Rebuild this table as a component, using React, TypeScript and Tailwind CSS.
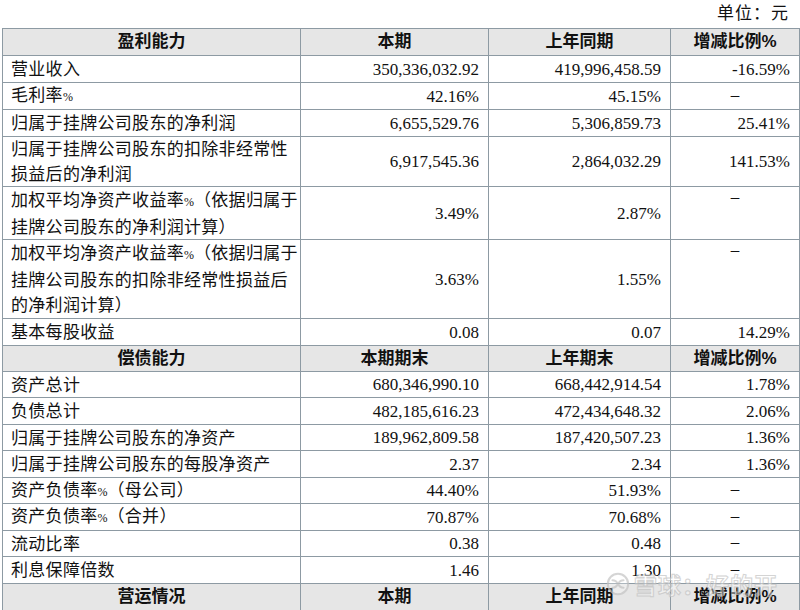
type Row = {
  label: string[];
  a: string;
  b: string;
  c: string;
  h: number;
  head?: boolean;
  top?: boolean;
};

const rows: Row[] = [
  { label: ["盈利能力"], a: "本期", b: "上年同期", c: "增减比例%", h: 27, head: true },
  { label: ["营业收入"], a: "350,336,032.92", b: "419,996,458.59", c: "-16.59%", h: 27 },
  { label: ["毛利率%"], a: "42.16%", b: "45.15%", c: "–", h: 27 },
  { label: ["归属于挂牌公司股东的净利润"], a: "6,655,529.76", b: "5,306,859.73", c: "25.41%", h: 27 },
  {
    label: ["归属于挂牌公司股东的扣除非经常性", "损益后的净利润"],
    a: "6,917,545.36",
    b: "2,864,032.29",
    c: "141.53%",
    h: 50,
  },
  {
    label: ["加权平均净资产收益率%（依据归属于", "挂牌公司股东的净利润计算）"],
    a: "3.49%",
    b: "2.87%",
    c: "–",
    h: 53,
    top: true,
  },
  {
    label: [
      "加权平均净资产收益率%（依据归属于",
      "挂牌公司股东的扣除非经常性损益后",
      "的净利润计算）",
    ],
    a: "3.63%",
    b: "1.55%",
    c: "–",
    h: 79,
    top: true,
  },
  { label: ["基本每股收益"], a: "0.08", b: "0.07", c: "14.29%", h: 27 },
  { label: ["偿债能力"], a: "本期期末", b: "上年期末", c: "增减比例%", h: 26, head: true },
  { label: ["资产总计"], a: "680,346,990.10", b: "668,442,914.54", c: "1.78%", h: 26 },
  { label: ["负债总计"], a: "482,185,616.23", b: "472,434,648.32", c: "2.06%", h: 27 },
  { label: ["归属于挂牌公司股东的净资产"], a: "189,962,809.58", b: "187,420,507.23", c: "1.36%", h: 26 },
  { label: ["归属于挂牌公司股东的每股净资产"], a: "2.37", b: "2.34", c: "1.36%", h: 27 },
  { label: ["资产负债率%（母公司）"], a: "44.40%", b: "51.93%", c: "–", h: 26 },
  { label: ["资产负债率%（合并）"], a: "70.87%", b: "70.68%", c: "–", h: 27 },
  { label: ["流动比率"], a: "0.38", b: "0.48", c: "–", h: 26 },
  { label: ["利息保障倍数"], a: "1.46", b: "1.30", c: "–", h: 27 },
  { label: ["营运情况"], a: "本期", b: "上年同期", c: "增减比例%", h: 27, head: true },
];

const serif = "font-['Liberation_Serif','Noto_Sans_CJK_SC',serif]";
const bold = "font-['Liberation_Sans','Noto_Sans_CJK_SC',sans-serif] font-bold";

// the % in the labels is a narrow glyph in the source
function Label({ text }: { text: string }) {
  const parts = text.split("%");
  return (
    <div>
      {parts.map((p, i) => (
        <span key={i}>
          {p}
          {i < parts.length - 1 && <span className="text-[12px] tracking-normal">%</span>}
        </span>
      ))}
    </div>
  );
}

function Cell({
  w,
  children,
  className = "",
}: {
  w: string;
  children: React.ReactNode;
  className?: string;
}) {
  return (
    <div className={`${w} shrink-0 border-r border-[#8d9aa3] flex ${className}`}>
      {children}
    </div>
  );
}

function TableRow({ row }: { row: Row }) {
  if (row.head) {
    return (
      <div
        className={`flex border-b border-[#8d9aa3] bg-[#e6e6e6] ${bold} text-[17px] text-[#111]`}
        style={{ height: row.h }}
      >
        <Cell w="w-[298px]" className="items-center justify-center">{row.label[0]}</Cell>
        <Cell w="w-[188px]" className="items-center justify-center">{row.a}</Cell>
        <Cell w="w-[182px]" className="items-center justify-center">{row.b}</Cell>
        <Cell w="w-[129px]" className="items-center justify-center">{row.c}</Cell>
      </div>
    );
  }
  const dash = row.c === "–";
  return (
    <div
      className={`flex border-b border-[#8d9aa3] ${serif} text-[17px] text-[#111]`}
      style={{ height: row.h }}
    >
      <Cell w="w-[298px]" className="items-center pl-2 overflow-hidden">
        <div className="whitespace-nowrap leading-[25px] tracking-[0.3px] pt-px">
          {row.label.map((l, i) => (
            <Label key={i} text={l} />
          ))}
        </div>
      </Cell>
      <Cell w="w-[188px]" className="items-center justify-end pr-[9px] pt-px">{row.a}</Cell>
      <Cell w="w-[182px]" className="items-center justify-end pr-[9px] pt-px">{row.b}</Cell>
      <Cell
        w="w-[129px]"
        className={
          dash
            ? `justify-center ${row.top ? "items-start pt-[1px]" : "items-center"}`
            : "items-center justify-end pr-[9px] pt-px"
        }
      >
        {dash ? <span className="-mt-1 leading-[25px]">–</span> : row.c}
      </Cell>
    </div>
  );
}

function Watermark() {
  return (
    <div className="absolute left-[606px] top-[572px] flex items-center gap-1 opacity-70 pointer-events-none">
      <svg width="24" height="24" viewBox="0 0 26 26" fill="none">
        <circle cx="13" cy="13" r="11" stroke="#c4c4c4" strokeWidth="2.2" fill="#fff" fillOpacity="0.4" />
        <path d="M7 9c3 0 5 2 6 4s3 4 6 4" stroke="#c4c4c4" strokeWidth="2.2" strokeLinecap="round" />
        <path d="M7 17c3 0 5-2 6-4s3-4 6-4" stroke="#c4c4c4" strokeWidth="2.2" strokeLinecap="round" />
      </svg>
      <span className="font-['Noto_Sans_CJK_SC',sans-serif] font-bold text-[23px] leading-none text-white/60 [-webkit-text-stroke:1px_#c2c2c2] tracking-[1px]">
        雪球：好的开
      </span>
    </div>
  );
}

export default function App() {
  return (
    <div className="relative w-[800px] h-[610px] overflow-hidden bg-white">
      <div className="flex justify-end h-[28px] items-center pr-[11px]">
        <span className={`${serif} text-[17px] text-[#111] tracking-[1px]`}>单位：元</span>
      </div>
      <div className="ml-[2px] w-[820px] border-l border-t border-[#8d9aa3]">
        {rows.map((r, i) => (
          <TableRow key={i} row={r} />
        ))}
      </div>
      <Watermark />
    </div>
  );
}
